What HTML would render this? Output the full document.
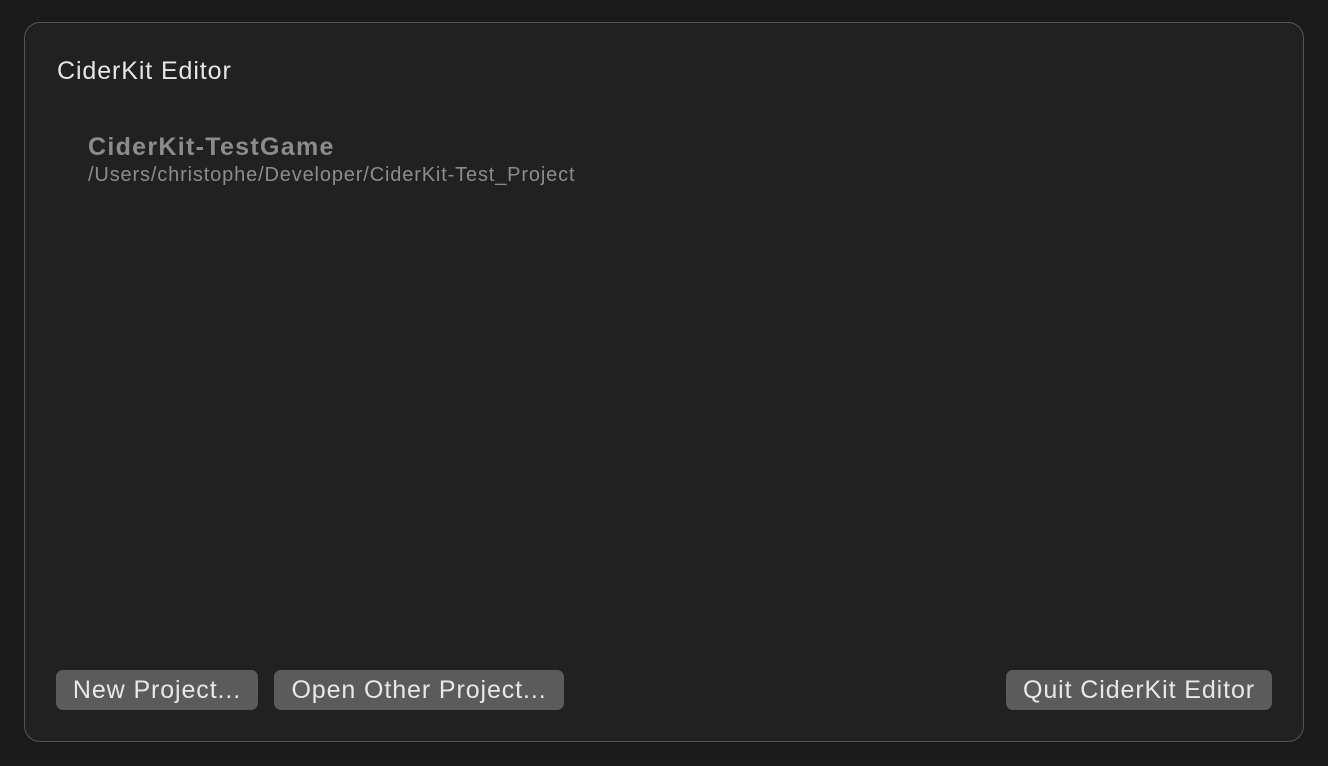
<!DOCTYPE html>
<html><head><style>
html,body{margin:0;padding:0;width:1328px;height:766px;overflow:hidden;background:#1a1a1a;font-family:"Liberation Sans",sans-serif;}
.win{position:absolute;left:24px;top:22px;width:1278px;height:718px;background:#212121;border:1px solid #555;border-radius:16px;}
.t{position:absolute;white-space:nowrap;}
.btn{position:absolute;top:670px;height:40px;background:#5b5b5b;border-radius:7px;color:#e8e8e8;font-size:25px;letter-spacing:0.9px;line-height:40px;text-align:center;}
</style></head><body>
<div class="win"></div>
<div class="t" style="left:57px;top:57px;font-size:25px;letter-spacing:0.9px;color:#e6e6e6;">CiderKit Editor</div>
<div class="t" style="left:88px;top:133px;font-size:25px;letter-spacing:1.3px;font-weight:bold;color:#8c8c8c;">CiderKit-TestGame</div>
<div class="t" style="left:88px;top:164px;font-size:20px;letter-spacing:0.85px;color:#8c8c8c;">/Users/christophe/Developer/CiderKit-Test_Project</div>
<div class="btn" style="left:56px;width:202px;">New Project...</div>
<div class="btn" style="left:274px;width:290px;">Open Other Project...</div>
<div class="btn" style="left:1006px;width:266px;">Quit CiderKit Editor</div>
</body></html>
